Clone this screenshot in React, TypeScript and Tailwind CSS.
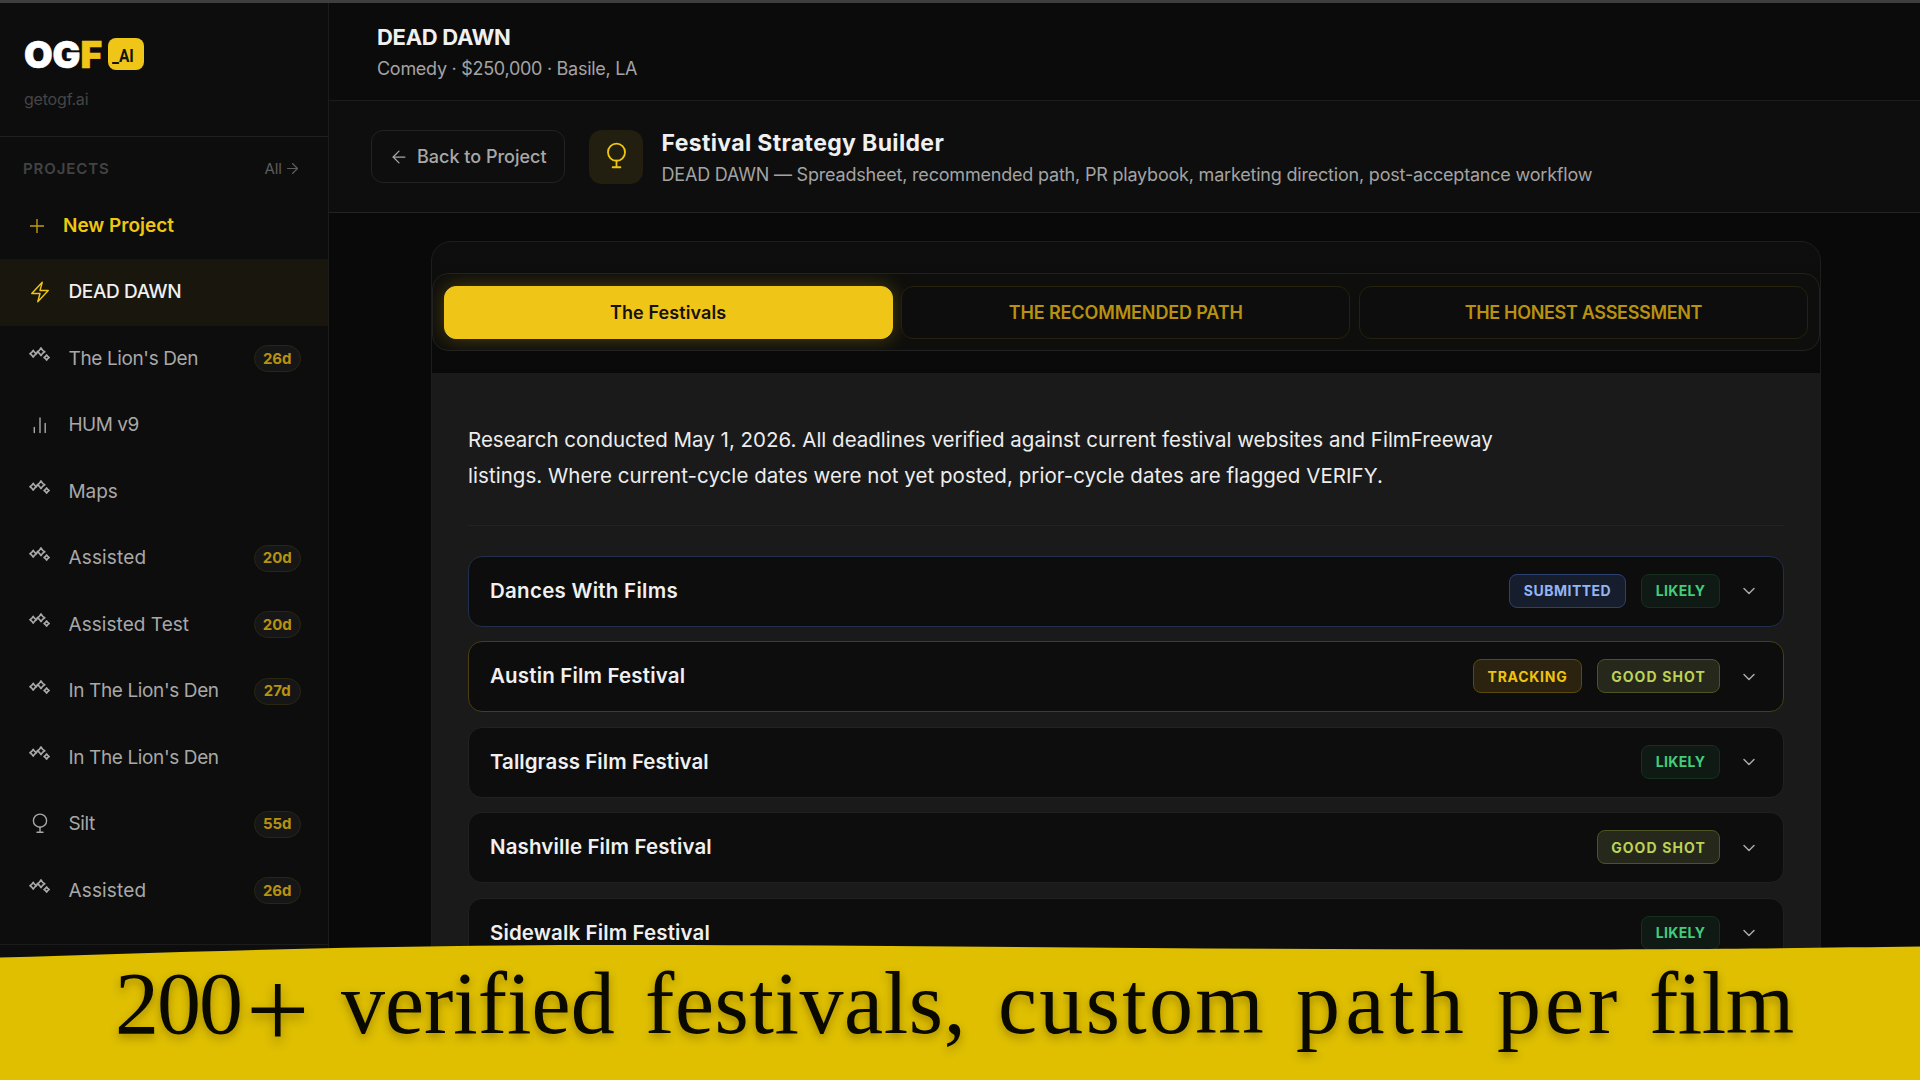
import type { ReactNode } from "react";
import clsx from "clsx";
import { ArrowLeft, ArrowRight, ChevronDown } from "lucide-react";

type IconName = "bolt" | "sparkle" | "bars" | "award";

type Project = {
  name: string;
  icon: IconName;
  days?: string;
  active?: boolean;
  tracking?: string;
};

const PROJECTS: Project[] = [
  { name: "DEAD DAWN", icon: "bolt", active: true },
  { name: "The Lion's Den", icon: "sparkle", days: "26d" },
  { name: "HUM v9", icon: "bars", tracking: "tracking-[-0.5px]" },
  { name: "Maps", icon: "sparkle", tracking: "tracking-[-0.1px]" },
  { name: "Assisted", icon: "sparkle", days: "20d", tracking: "tracking-[0.15px]" },
  { name: "Assisted Test", icon: "sparkle", days: "20d", tracking: "tracking-[0.05px]" },
  { name: "In The Lion's Den", icon: "sparkle", days: "27d" },
  { name: "In The Lion's Den", icon: "sparkle" },
  { name: "Silt", icon: "award", days: "55d" },
  { name: "Assisted", icon: "sparkle", days: "26d", tracking: "tracking-[0.15px]" },
];

const TABS = [
  { label: "The Festivals", active: true, tracking: "tracking-[0.1px]" },
  { label: "THE RECOMMENDED PATH", active: false, tracking: "tracking-[-0.13px]" },
  { label: "THE HONEST ASSESSMENT", active: false, tracking: "tracking-[-0.33px]" },
];

type Tag = "SUBMITTED" | "TRACKING" | "LIKELY" | "GOOD SHOT";

const TAG_STYLES: Record<Tag, string> = {
  SUBMITTED: "w-[117px] tracking-[0.5px] border-[#2b4270] bg-[#161e2d] text-[#93b4f5]",
  TRACKING: "w-[109px] tracking-[0.75px] border-[#5c4a0c] bg-[#2b2210] text-[#efc30f]",
  LIKELY: "w-[79px] tracking-[0.35px] border-[#15301f] bg-[#0f1a14] text-[#45cb7c]",
  "GOOD SHOT": "w-[123px] tracking-[1.1px] border-[#4d5424] bg-[#25281a] text-[#bdd257]",
};

const FESTIVALS: { name: string; tags: Tag[]; border: string; tracking: string }[] = [
  {
    name: "Dances With Films",
    tags: ["SUBMITTED", "LIKELY"],
    border: "border-[#1f2f4d]",
    tracking: "tracking-[0.27px]",
  },
  {
    name: "Austin Film Festival",
    tags: ["TRACKING", "GOOD SHOT"],
    border: "border-[#4a3d12]",
    tracking: "tracking-[0.17px]",
  },
  { name: "Tallgrass Film Festival", tags: ["LIKELY"], border: "border-[#222222]", tracking: "tracking-[0.05px]" },
  { name: "Nashville Film Festival", tags: ["GOOD SHOT"], border: "border-[#202020]", tracking: "tracking-[0.12px]" },
  { name: "Sidewalk Film Festival", tags: ["LIKELY"], border: "border-[#202020]", tracking: "tracking-[0.12px]" },
];

function Icon({ name, className }: { name: IconName; className?: string }) {
  const paths: Record<IconName, ReactNode> = {
    bolt: <path d="m3.75 13.5 10.5-11.25L12 10.5h8.25L9.75 21.75 12 13.5H3.75Z" />,
    sparkle: (
      <g strokeWidth={1.6}>
        <path d="M5.2 5.3Q6.4 7.6 8.5 8.7Q6.4 9.8 5.2 12.1Q4 9.8 1.9 8.7Q4 7.6 5.2 5.3Z" />
        <path d="M13 2.9Q14.2 5.6 16.8 6.8Q14.2 8 13 10.6Q11.8 8 9.2 6.8Q11.8 5.6 13 2.9Z" />
        <path d="M18.6 9.9Q19.4 11.7 21.2 12.5Q19.4 13.3 18.6 15.1Q17.8 13.3 16 12.5Q17.8 11.7 18.6 9.9Z" />
        <path d="m8 8.4 2.4-1.4" />
      </g>
    ),
    bars: <path d="M6.3 14.5v5M12 5v14.5M17.2 10.5v9" />,
    award: (
      <>
        <circle cx="12" cy="8.7" r="6.6" />
        <path d="M12 15.3v4.9M9 20.3h6" />
      </>
    ),
  };
  return (
    <svg
      className={clsx("shrink-0", className)}
      viewBox="0 0 24 24"
      fill="none"
      stroke="currentColor"
      strokeWidth={1.4}
      strokeLinecap="round"
      strokeLinejoin="round"
    >
      {paths[name]}
    </svg>
  );
}

function Sidebar() {
  return (
    <aside className="flex h-full w-[329px] shrink-0 flex-col border-r border-[#1c1c1c] bg-[#0d0d0d]">
      <div className="h-[134px] shrink-0 border-b border-[#202020] pl-6 pt-[35px]">
        <div className="flex items-center">
          <div className="flex h-8 w-[84px] items-center text-[37px] font-black leading-none tracking-[-0.1px] text-white [-webkit-text-stroke:0.6px]">
            OG<span className="text-[#efc518]">F</span>
          </div>
          <div className="flex h-8 w-9 items-end rounded-lg bg-[#efc518] pb-[5px] pl-[4px] font-[Roboto] text-[18px] font-bold leading-[19px] text-[#15130a]">
            <span className="origin-left scale-x-[0.86]">_AI</span>
          </div>
        </div>
        <div className="mt-[19px] text-base leading-5 tracking-[-0.2px] text-[#454545]">getogf.ai</div>
      </div>

      <div className="flex h-[55.5px] shrink-0 items-center justify-between pl-[23px] pr-[27px] pt-2">
        <span className="text-[15px] font-semibold tracking-[0.9px] text-[#434343]">PROJECTS</span>
        <span className="flex items-center gap-[2px] text-[15px] text-[#5c5c5c]">
          All
          <ArrowRight className="size-[17px]" strokeWidth={1.7} />
        </span>
      </div>

      <nav className="min-h-0 flex-1 overflow-hidden">
        <div className="flex h-[66.5px] items-center pl-[30px] text-[19px] font-semibold text-[#efc70f]">
          <svg className="mr-[19px] size-[14px]" viewBox="0 0 14 14" fill="none" stroke="#c19c0f" strokeWidth={1.4}>
            <path d="M7 0v14M0 7h14" />
          </svg>
          New Project
        </div>
        {PROJECTS.map((p, i) => (
          <div
            key={i}
            className={clsx(
              "flex h-[66.5px] items-center pl-7 pr-[27px] text-[19px]",
              p.active ? "bg-[#19160d] font-medium text-[#f0f0f0]" : "text-[#a8a8a8]",
            )}
          >
            <Icon
              name={p.icon}
              className={clsx("mr-[16.5px] size-6", p.active && "text-[#efc518]", p.icon === "sparkle" && "mb-[3px]")}
            />
            <span className={clsx("flex-1", p.tracking ?? "tracking-[-0.38px]")}>{p.name}</span>
            {p.days && (
              <span className="flex h-[27px] w-[47.5px] items-center justify-center rounded-full border border-[#2b2610] bg-[#161616] text-[15px] font-bold text-[#b8920f]">
                {p.days}
              </span>
            )}
          </div>
        ))}
        {/* next row, cut off by the footer */}
        <div className="flex h-[66.5px] items-center justify-end pr-[27px]">
          <span className="h-[27px] w-[47px] rounded-full border border-[#2b2610]" />
        </div>
      </nav>
      <div className="h-[136px] shrink-0 border-t border-[#1c1c1c]" />
    </aside>
  );
}

function Banner() {
  return (
    <div className="absolute inset-x-0 bottom-0 h-[136px]">
      <svg className="absolute inset-0 h-full w-full" viewBox="0 0 1920 136" preserveAspectRatio="none">
        <path
          d="M0 13.5C180 8 370 1 620 1C900 1 1200 5.5 1500 5.5C1680 5.5 1800 4 1920 2.5V136H0Z"
          fill="#dfbf00"
        />
      </svg>
      <div className="relative flex items-baseline whitespace-pre pl-[115px] pt-[10px] font-['Liberation_Serif',serif] text-[88px] leading-[100px] text-[#0a0900] [text-shadow:0_4px_8px_rgba(70,55,0,0.4)]">
        <span className="w-[226px] tracking-[-2px]">
          200<span className="ml-[12px] inline-block translate-y-[7px] scale-[1.28] tracking-normal">+</span>
        </span>
        <span className="w-[304px]">verified</span>
        <span className="w-[353px] tracking-[0.6px]">festivals,</span>
        <span className="w-[298px] tracking-[2.3px]">custom</span>
        <span className="w-[201px] tracking-[5.4px]">path</span>
        <span className="w-[152px] tracking-[4px]">per</span>
        <span className="tracking-[-0.5px]">film</span>
      </div>
    </div>
  );
}

export default function App() {
  return (
    <div className="relative flex h-[1080px] w-[1920px] flex-col overflow-hidden bg-[#090909] font-[Inter,sans-serif] antialiased">
      <div className="h-[3px] shrink-0 bg-[#3e3e3e]" />
      <div className="flex min-h-0 flex-1">
        <Sidebar />
        <main className="flex min-w-0 flex-1 flex-col">
          <header className="h-[98px] shrink-0 border-b border-[#1c1c1c] bg-[#0b0b0b] pl-12 pt-[19px]">
            <div className="text-[22px] font-bold leading-[30px] tracking-[-0.3px] text-[#f0f0f0]">DEAD DAWN</div>
            <div className="mt-[3px] text-[18px] leading-7 tracking-[-0.28px] text-[#a3a3a3]">
              Comedy · $250,000 · Basile, LA
            </div>
          </header>

          <div className="flex h-[112px] shrink-0 items-center border-b border-[#232323] bg-[#0e0e0e] pl-[42px]">
            <button className="flex h-[53px] w-[194px] items-center rounded-xl border border-[#222222] pl-[17px] text-[18px] font-medium text-[#a8a8a8]">
              <ArrowLeft className="mr-2 size-5" strokeWidth={1.5} />
              Back to Project
            </button>
            <div className="ml-6 flex size-[54px] items-center justify-center rounded-[13px] bg-[#221e10] text-[#efc70f]">
              <Icon name="award" className="size-[31px]" />
            </div>
            <div className="ml-[18.5px] pt-[4px]">
              <div className="text-[23px] font-bold leading-[30px] tracking-[0.35px] text-[#f0f0f0]">
                Festival Strategy Builder
              </div>
              <div className="mt-[3px] text-[18px] leading-7 tracking-[-0.2px] text-[#a3a3a3]">
                DEAD DAWN — Spreadsheet, recommended path, PR playbook, marketing direction, post-acceptance workflow
              </div>
            </div>
          </div>

          <div className="min-h-0 flex-1 overflow-hidden pl-[102px] pt-[28px]">
            <section className="h-[1000px] w-[1390px] overflow-hidden rounded-t-[20px] border border-[#1d1d1d] bg-[#1a1a1a]">
              <div className="bg-gradient-to-b from-[#0e0e0e] to-[#090909] pb-[22px] pt-[31px]">
                <div className="flex h-[78px] items-center gap-[8.5px] overflow-hidden rounded-2xl border border-[#222222] bg-[#0e0e0c] pl-[10.5px] pr-[11px]">
                  {TABS.map((t) => (
                    <button
                      key={t.label}
                      className={clsx(
                        "h-[53px] flex-1 rounded-xl border text-[18px] font-semibold",
                        t.tracking,
                        t.active
                          ? "border-[#efc518] bg-[#efc518] text-[#14120a] shadow-[0_0_20px_rgba(239,197,24,0.28)]"
                          : "border-[#25220f] bg-[#0d0d0d] text-[#b8920f]",
                      )}
                    >
                      {t.label}
                    </button>
                  ))}
                </div>
              </div>

              <div className="px-9 pt-[49px]">
                <p className="text-[20.5px] leading-[36.4px] text-[#ededed]">
                  Research conducted May 1, 2026. All deadlines verified against current festival websites and FilmFreeway
                  <br />
                  <span className="tracking-[0.045px]">
                    listings. Where current-cycle dates were not yet posted, prior-cycle dates are flagged VERIFY.
                  </span>
                </p>
                <hr className="mb-[30px] mt-[30px] border-[#232323]" />
                <div className="flex flex-col gap-[14.5px]">
                  {FESTIVALS.map((f) => (
                    <div
                      key={f.name}
                      className={clsx(
                        "flex h-[71px] items-center rounded-[14px] border bg-[#0d0d0d] pl-[21px] pr-6",
                        f.border,
                      )}
                    >
                      <span className={clsx("flex-1 text-[20.5px] font-semibold text-[#f0f0f0]", f.tracking)}>
                        {f.name}
                      </span>
                      <div className="mb-px flex gap-[15px]">
                        {f.tags.map((tag) => (
                          <span
                            key={tag}
                            className={clsx(
                              "flex h-[34px] items-center justify-center rounded-lg border text-[14px] font-bold",
                              TAG_STYLES[tag],
                            )}
                          >
                            {tag}
                          </span>
                        ))}
                      </div>
                      <ChevronDown className="ml-[19px] size-5 text-[#a8a8a8]" strokeWidth={1.8} />
                    </div>
                  ))}
                </div>
              </div>
            </section>
          </div>
        </main>
      </div>
      <Banner />
    </div>
  );
}
